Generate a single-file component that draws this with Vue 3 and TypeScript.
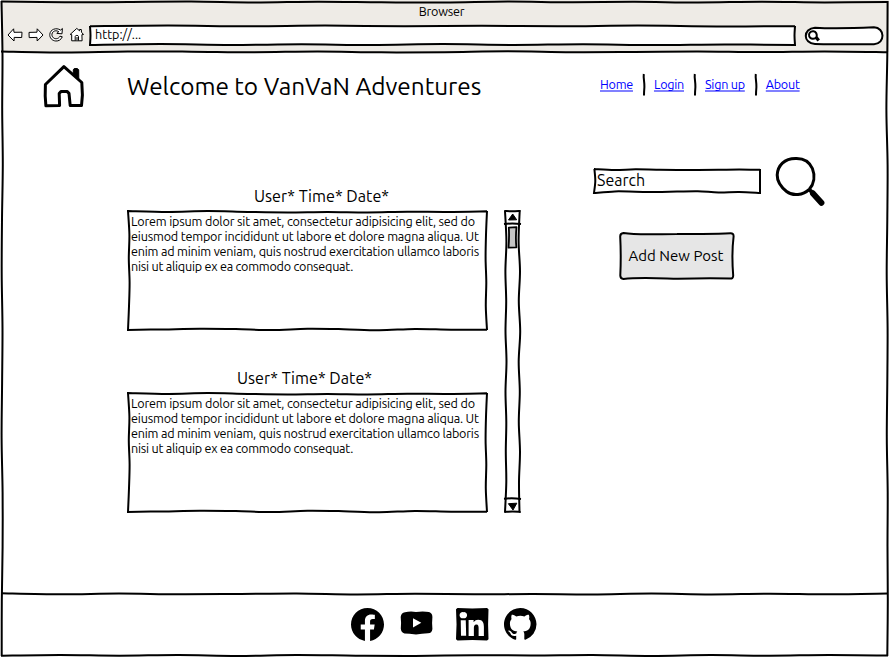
<script setup lang="ts">
type Pt = [number, number]

// Hand-drawn stroke between two points; offsets push evenly spaced
// intermediate points away from the straight line.
function points(x1: number, y1: number, x2: number, y2: number, offs: number[]): Pt[] {
  const n = offs.length - 1
  const flat = Math.abs(x2 - x1) > Math.abs(y2 - y1)
  return offs.map((o, i): Pt => {
    const x = x1 + ((x2 - x1) * i) / n
    const y = y1 + ((y2 - y1) * i) / n
    return flat ? [x, y + o] : [x + o, y]
  })
}

function smooth(p: Pt[], join = false): string {
  let d = `${join ? 'L' : 'M'}${p[0][0]} ${p[0][1]}`
  for (let i = 0; i < p.length - 1; i++) {
    const a = p[Math.max(i - 1, 0)]
    const b = p[i]
    const c = p[i + 1]
    const e = p[Math.min(i + 2, p.length - 1)]
    d += `C${b[0] + (c[0] - a[0]) / 6} ${b[1] + (c[1] - a[1]) / 6} ${c[0] - (e[0] - b[0]) / 6} ${c[1] - (e[1] - b[1]) / 6} ${c[0]} ${c[1]}`
  }
  return d
}

const line = (x1: number, y1: number, x2: number, y2: number, offs: number[]) =>
  smooth(points(x1, y1, x2, y2, offs))

function box(w: number, h: number, t: number[], r: number[], b: number[], l: number[]): string {
  return (
    smooth(points(1, 1, w - 1, 1, t)) +
    smooth(points(w - 1, 1, w - 1, h - 1, r), true) +
    smooth(points(w - 1, h - 1, 1, h - 1, b), true) +
    smooth(points(1, h - 1, 1, 1, l), true) +
    'Z'
  )
}

const frame = {
  top: line(1, 2, 888, 2, [-0.5, 0.3, 0, -0.4, 0.5, -0.3, 0.3, 0.6, -0.4, 0.3, -0.2, 0.5, -0.3, 0.4, 0]),
  chrome: line(1, 52, 888, 51.9, [-0.6, 0.4, -0.5, -0.3, 0.3, -0.5, 0.4, 0.2, -0.6, 0.3, 0.1, -0.4, 0.2, -0.5, 0.3]),
  left: line(2, 1, 2, 656, [-0.5, 0.5, 0.2, 0.8, 0, -0.3, 0.5, 0.1, -0.4, 0.6, 0.6, -0.2, -0.3]),
  right: line(887.3, 1, 887.3, 656, [0.3, 0, -0.9, 0.3, 0, -0.6, 0.3, 0, -0.5, 0.4, 0.2, 0.5, 0]),
  footer: line(1, 594, 888, 594, [-0.8, 0.2, -0.4, 0.3, 0, -0.5, 0.4, -0.2, 0.3, 0, 0.4, -0.5, 0.4, -0.3, 0.3, -0.4]),
  bottom: line(1, 655.5, 888, 655.5, [0.2, -0.5, 0.2, -0.5, 0.4, -0.5, 0.2, 0.5, -0.3, 0, -0.5, 0.4, -0.4, 0.2, -0.5, 0.1]),
}

const address = box(707, 21, [0.2, -0.5, 0.3, -0.4, 0.3, -0.2, 0.3, -0.4, 0.4, 0.2], [0, -0.5, 0],
  [0, -0.6, 0.1, -0.8, -0.1, -0.9, 0, -0.7, 0, -0.9, 0], [0, 0.5, 0])
const searchBox = box(168, 26, [0, 1, 0.3, 0.7, 1, 1, 0.8, 0.5, 0.8], [0, 0, 0],
  [0, -1, -0.6, -1.8, -1.4, -0.9, -1.3, -1.6, 0], [0, 1.3, 0.4])
const postBox = box(361, 121, [0, 0.9, 0.1, 0.9, 1.4, 0.9, 1.4, 0.7, 0.9, 0.3], [0, -1, -1.4, -0.7, -1.2, 0],
  [-0.3, -0.3, -1.1, 0.2, -0.8, -1.2, 0, -0.9, -1.2, -0.6, 0], [0, 1, 1.6, 0.8, 1.4, 0])
const track = box(17, 303, [0, 0.3, 0], [-0.3, -1.4, 0, -1.2, 0.2, -1.3, -0.2, -1.2, 0, -1, -0.5],
  [0, -0.6, 0], [0, 1.3, 0.8, 1.3, 0.5, 1.5, 0.5, 1.2, 0.4, 1.4, 0])

interface Line { text: string; gap: number }
const body: Line[] = [
  { text: 'Lorem ipsum dolor sit amet, consectetur adipisicing elit, sed do', gap: -0.175 },
  { text: 'eiusmod tempor incididunt ut labore et dolore magna aliqua. Ut', gap: -0.18 },
  { text: 'enim ad minim veniam, quis nostrud exercitation ullamco laboris', gap: -0.21 },
  { text: 'nisi ut aliquip ex ea commodo consequat.', gap: -0.245 },
]
const posts = [
  { id: 1, title: 'User* Time* Date*', shift: 'post-first' },
  { id: 2, title: 'User* Time* Date*', shift: 'post-second' },
]
const links = ['Home', 'Login', 'Sign up', 'About']
</script>

<template>
  <div class="window">
    <header class="chrome">
      <div class="caption">Browser</div>
      <div class="toolbar">
        <svg class="tool" width="16" height="16" viewBox="0 0 16 16"><path d="M1 8 6.6 1.8 7 5.3 15 5.2 14.7 10.5 7.2 10.4 7 14Z" /></svg>
        <svg class="tool" width="16" height="16" viewBox="0 0 16 16"><path d="M15 8 9.2 1.8 9 5.2 1 5.4 1.2 10.6 9 10.4 9.2 14Z" /></svg>
        <svg class="tool reload" width="16" height="16" viewBox="0 0 16 16"><path d="M14.4 1.5 14 6.8 8.8 6.4 10.8 4.7C8.6 3.2 5.5 3.5 4.3 6C2.9 9 5.4 12 8.3 11.7C10.2 11.5 11.3 10.6 12 9.2L14.3 9.8C13.1 12.7 10.7 14.2 7.8 14C4 13.7 1.5 10.8 1.8 7.3C2.2 2.5 8 .1 12.6 3.1Z" /></svg>
        <svg class="tool" width="16" height="16" viewBox="0 0 16 16"><path d="M1.2 7.4 7.8 1.4 10.5 3.8V2.5h1.8l.2 2.7 2 2.3-1.6.2.2 6.1H2.7V7.6ZM6.2 13.6V9.5c0-1.5 3.3-1.5 3.3 0v4.1M8 10v3" /></svg>
        <div class="address">
          <svg class="outline" width="707" height="21"><path :d="address" /></svg>
          <span class="label url">http://...</span>
        </div>
        <svg class="pill" width="80" height="20" viewBox="0 0 80 20">
          <path d="M11 1.7C28 2.7 51 2.1 70 1.3C81 1.6 81.6 17.6 70 18.2C51 17.9 28 18.7 11 18C-1.2 17.4-1.4 2.4 11 1.7Z" />
          <path class="lens" d="M9.6 5.2C6.2 4.7 4.4 7.6 5.2 10.2C6.2 13.5 11 13.6 12.5 11C13.4 8.4 12 5.5 9.6 5.2Z" /><path class="grip" d="m12.1 11.3 2.6 3.2" />
        </svg>
      </div>
    </header>

    <main class="page">
      <div class="masthead">
        <svg class="home" width="42" height="44" viewBox="0 0 42 44">
          <path d="M2.4 20.5 20.9 2.6 38.8 18.5 39.4 31 38.5 41.6 27.2 41.6 26 29.4 24 27.4 18 27.6 16.2 29.6 16.6 41.4 2.9 41.8 2.2 32Z" />
          <path class="solid" d="M30.3 10.5V5.8l.9-1.2 3.2-.1 1.3 1.3.1 10.2Z" />
        </svg>
        <h1>Welcome to VanVaN Adventures</h1>
        <nav>
          <template v-for="(l, i) in links" :key="l">
            <svg v-if="i" class="rule" width="4" height="24"><path d="M1.8 1C1.2 5 2.6 9 2.4 14Q2 19 2 22.5" /></svg>
            <a>{{ l }}</a>
          </template>
        </nav>
      </div>

      <div class="columns">
        <section class="feed">
          <article v-for="p in posts" :key="p.id" :class="['post', p.shift]">
            <h2>{{ p.title }}</h2>
            <div class="card">
              <svg class="outline" width="361" height="121"><path :d="postBox" /></svg>
              <p class="label"><span v-for="b in body" :key="b.text" :style="{ letterSpacing: b.gap + 'px' }">{{ b.text }}</span></p>
            </div>
          </article>
        </section>

        <svg class="scroll" width="19" height="303" viewBox="0 0 19 303">
          <path :d="track" />
          <path d="M0 14Q8 13.1 17 14M0 288.8Q8 287.8 17 289" />
          <path class="solid" d="M8.7 4 12.7 9.8 4.5 10ZM4.4 293.7 12.8 293.2 9 300Z" />
          <path class="thumb" d="M4.8 17.6 12.5 17.2Q11.4 27 12.4 37.4L4.5 37.7Q5.4 27 4.8 17.6Z" />
        </svg>

        <aside>
          <div class="finder">
            <div class="search">
              <svg class="outline" width="168" height="26"><path :d="searchBox" /></svg>
              <span class="label">Search</span>
            </div>
            <svg class="magnifier" width="50" height="50" viewBox="0 0 50 50">
              <path d="M20.7 2.4C29 2.1 34.8 6.5 37.4 12.5C40.4 20 39 28 34.3 33.3C28 39.2 18 40.5 11.6 35.5C5.4 30.5 2.1 26 2.2 19C2.6 9.5 9.5 2.3 20.7 2.4Z" />
              <path class="handle" d="M34.5 34 39 37.5" /><path class="handle end" d="M38 37.5 46.4 46.8" />
            </svg>
          </div>
          <button type="button">
            <svg class="outline button" width="116" height="48"><path d="M4.5 1.1C19 3.4 40 2 58 2C76 1.6 94 2.4 111.5 1.3Q114.7 1.2 114.6 4.5C113.2 16 113.1 30 114.2 43.5Q114.2 46.8 111 46.5C92 46.2 76 46.3 59 46.8C39 46.3 20 45.2 4.5 47Q1.3 46.7 1.3 43.5Q2.2 24 1.2 4.5Q1.2 1.4 4.5 1.1Z" /></svg>
            <span class="label">Add New Post</span>
          </button>
        </aside>
      </div>
    </main>

    <footer>
      <svg width="33" height="33" viewBox="2 2 20 20"><path d="M12 2.04C6.5 2.04 2 6.53 2 12.06C2 17.06 5.66 21.21 10.44 21.96V14.96H7.9V12.06H10.44V9.85C10.44 7.34 11.93 5.96 14.22 5.96C15.31 5.96 16.45 6.15 16.45 6.15V8.62H15.19C13.95 8.62 13.56 9.39 13.56 10.18V12.06H16.34L15.89 14.96H13.56V21.96A10 10 0 0 0 22 12.06C22 6.53 17.5 2.04 12 2.04Z" /></svg>
      <svg class="video" width="33" height="24" viewBox="0 0 33 24"><path d="M5 1.2Q10 .1 16 .9Q24 0 29 1.1Q32.3 2 32.4 6Q31.8 12 32.4 18Q32 22.2 28 22.3Q22 22.6 16 23.6Q9 22.5 4.5 22.4Q1 21.5.8 17.5Q1.4 12 .7 6Q1 2 5 1.2ZM13 7.2V16.6L21.3 11.8Z" /></svg>
      <svg class="linked" width="32.5" height="32.5" viewBox="0 0 24 24"><path d="M20.6 20.7h-3.9v-5.8c0-1.3-.1-2.8-1.6-2.8-1.7 0-1.9 1.3-1.9 2.8v5.8H9.3V8.9h3.7v1.6c.5-.9 1.7-1.9 3.4-1.9 3.5 0 4.2 2.4 4.2 5.5v6.6zM5.4 7.6a2.3 2.3 0 1 1 0-4.5 2.3 2.3 0 1 1 0 4.500zM7.5 20.500H3.700L3.500 9h3.700zM22.900 0L12 .4 1.100 0 0 .9 .4 12 0 23.100l1.100.9 11-.3 10.800.3 1.100-.9L23.700 12 24 .9z" /></svg>
      <svg class="hub" width="32.500" height="32.500" viewBox="0 0 16 16"><path d="M8 0C3.58 0 0 3.58 0 8c0 3.54 2.29 6.53 5.47 7.59.4.07.55-.17.55-.38 0-.19-.01-.82-.01-1.49-2.01.37-2.53-.49-2.69-.94-.09-.23-.48-.94-.82-1.13-.28-.15-.68-.52-.01-.53.63-.01 1.08.58 1.23.82.72 1.21 1.87.87 2.33.66.07-.52.28-.87.51-1.07-1.78-.2-3.64-.89-3.64-3.95 0-.87.31-1.59.82-2.15-.08-.2-.36-1.02.08-2.12 0 0 .67-.21 2.2.82.64-.18 1.32-.27 2-.27.68 0 1.36.09 2 .27 1.53-1.04 2.2-.82 2.2-.82.44 1.1.16 1.92.08 2.12.51.56.82 1.27.82 2.15 0 3.07-1.87 3.75-3.65 3.95.29.25.54.73.54 1.48 0 1.07-.01 1.93-.01 2.2 0 .21.15.46.55.38A8.013 8.013 0 0016 8c0-4.42-3.58-8-8-8z" /></svg>
    </footer>

    <svg class="frame" width="889" height="657">
      <path v-for="(d, name) in frame" :key="name" :d="d" />
    </svg>
  </div>
</template>

<style>
body {
  background: #fff;
}
</style>

<style scoped>
.window {
  position: relative;
  display: flex;
  flex-direction: column;
  width: 889px;
  height: 657px;
  overflow: hidden;
  color: #000;
  font-family: Ubuntu, 'Noto Sans', sans-serif;
  font-size: 12.6px;
  line-height: 15px;
  letter-spacing: -0.25px;
}
svg {
  display: block;
  flex: none;
  overflow: visible;
  fill: none;
  stroke: #000;
  stroke-width: 2;
  stroke-linejoin: round;
}
.frame,
.outline {
  position: absolute;
  top: 0;
  left: 0;
  pointer-events: none;
}
.outline {
  fill: #fff;
  stroke-linejoin: miter;
}
.label {
  position: relative;
}
.chrome {
  height: 52px;
  margin-left: 2px;
  background: #eeebe6;
}
.caption {
  height: 25px;
  padding: 4px 6px 0 0;
  box-sizing: border-box;
  text-align: center;
  margin-left: -2px;
}
.toolbar {
  display: flex;
  align-items: flex-start;
  padding-left: 5px;
}
.tool {
  margin: 2px 4.5px 0 0;
  fill: #fff;
  stroke-width: 1;
}
.reload {
  margin-right: 5px;
}
.address {
  position: relative;
  width: 707px;
  height: 21px;
  margin-left: -0.5px;
}
.url {
  display: block;
  padding: 2px 0 0 6px;
  letter-spacing: 0;
}
.pill {
  margin: 1px 0 0 8px;
  fill: #fff;
}
.grip {
  stroke-width: 3.2;
}
.page {
  height: 542px;
}
.masthead {
  display: flex;
  height: 92px;
  padding-left: 43px;
}
.home {
  margin-top: 12px;
  stroke-width: 3;
}
.solid {
  fill: #000;
  stroke-width: 1;
}
h1 {
  width: 473px;
  margin: 18px 0 0 42px;
  font-size: 24.4px;
  font-weight: 400;
  line-height: 32px;
  letter-spacing: -0.04px;
  white-space: nowrap;
}
nav {
  display: flex;
  height: 24px;
  margin-top: 21px;
}
nav a {
  height: 15px;
  margin-top: 4px;
  color: #00f;
  text-decoration: underline;
  text-decoration-color: #8080ff;
  text-decoration-thickness: 2px;
  text-decoration-skip-ink: none;
  text-underline-offset: 1px;
}
.rule {
  margin: 0 8px 0 9px;
}
.columns {
  display: flex;
  padding-left: 127px;
}
.feed {
  width: 362px;
  padding-top: 42px;
}
.post {
  height: 182px;
}
h2 {
  height: 24px;
  margin: 0;
  font-size: 16.2px;
  font-weight: 400;
  line-height: 20px;
  letter-spacing: 0;
}
.post-first h2 {
  padding-left: 127px;
}
.post-second h2 {
  padding-left: 110px;
}
.card {
  position: relative;
  height: 121px;
}
.card p {
  margin: 0;
  padding: 4px 0 0 4px;
}
.card span {
  display: block;
  white-space: nowrap;
}
.scroll {
  margin: 66px 0 0 15px;
}
.thumb {
  fill: #c5c5c5;
  stroke-width: 1.8;
}
aside {
  padding: 12px 0 0 70px;
}
.finder {
  display: flex;
}
.search {
  position: relative;
  width: 168px;
  height: 26px;
  margin-top: 12px;
  font-size: 16px;
  letter-spacing: 0;
}
.search .label {
  display: block;
  padding: 3px 0 0 4px;
  line-height: 18px;
}
.magnifier {
  margin: -0.5px 0 0 14px;
  stroke-width: 3;
}
.handle {
  stroke-width: 4;
}
.end {
  stroke-width: 6;
  stroke-linecap: round;
}
button {
  position: relative;
  display: block;
  width: 116px;
  height: 48px;
  margin: 26.5px 0 0 26px;
  padding: 0 2px 0 0;
  border: 0;
  background: none;
  color: #000;
  font: 15px/20px Ubuntu, 'Noto Sans', sans-serif;
}
.button {
  fill: #e6e6e6;
}
footer {
  display: flex;
  align-items: flex-start;
  height: 63px;
  padding: 14px 0 0 351px;
  box-sizing: border-box;
}
footer svg {
  fill: #000;
  stroke: none;
}
.video {
  margin: 3px 0 0 15.5px;
}
.linked {
  margin: 0 0 0 23px;
}
.hub {
  margin-left: 15.5px;
}
</style>
